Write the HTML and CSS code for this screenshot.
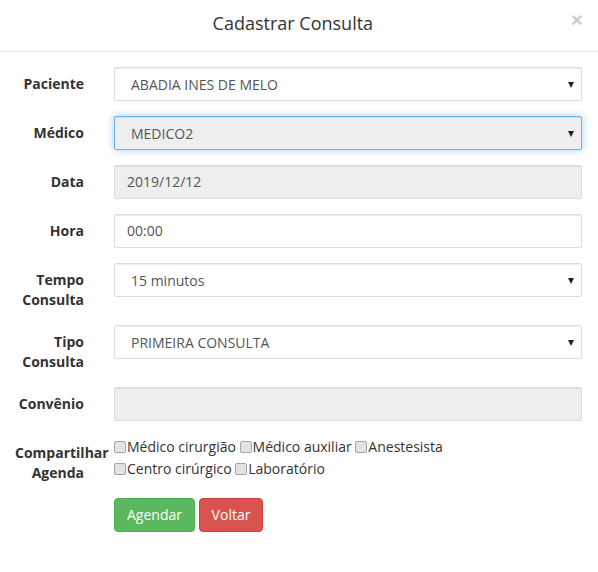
FILE: index.html
```html
<!DOCTYPE html>
<html lang="pt-BR">
<head>
<meta charset="utf-8">
<title>Cadastrar Consulta</title>
<link rel="stylesheet" href="styles.css">
</head>
<body>
<div class="modal">
  <div class="modal-header">
    <button class="close" type="button">&times;</button>
    <h4 class="modal-title">Cadastrar Consulta</h4>
  </div>
  <div class="modal-body">
    <form class="form">
      <div class="form-group">
        <label class="control-label">Paciente</label>
        <div class="control"><div class="select">ABADIA INES DE MELO</div></div>
      </div>
      <div class="form-group">
        <label class="control-label">Médico</label>
        <div class="control"><div class="select readonly focus">MEDICO2</div></div>
      </div>
      <div class="form-group">
        <label class="control-label">Data</label>
        <div class="control"><div class="input readonly">2019/12/12</div></div>
      </div>
      <div class="form-group">
        <label class="control-label">Hora</label>
        <div class="control"><div class="input">00:00</div></div>
      </div>
      <div class="form-group">
        <label class="control-label">Tempo Consulta</label>
        <div class="control"><div class="select">15 minutos</div></div>
      </div>
      <div class="form-group">
        <label class="control-label">Tipo Consulta</label>
        <div class="control"><div class="select">PRIMEIRA CONSULTA</div></div>
      </div>
      <div class="form-group">
        <label class="control-label">Convênio</label>
        <div class="control"><div class="input readonly"></div></div>
      </div>
      <div class="form-group">
        <label class="control-label">Compartilhar Agenda</label>
        <div class="control checks">
          <div class="check-line">
            <label class="check"><span class="box"></span>Médico cirurgião</label>
            <label class="check"><span class="box"></span>Médico auxiliar</label>
            <label class="check"><span class="box"></span>Anestesista</label>
          </div>
          <div class="check-line">
            <label class="check"><span class="box"></span>Centro cirúrgico</label>
            <label class="check"><span class="box"></span>Laboratório</label>
          </div>
        </div>
      </div>
      <div class="form-group">
        <div class="control offset">
          <button type="button" class="btn btn-success">Agendar</button>
          <button type="button" class="btn btn-danger">Voltar</button>
        </div>
      </div>
    </form>
  </div>
</div>
</body>
</html>
```

FILE: styles.css
```css
* { box-sizing: border-box; }
html, body {
  margin: 0;
  padding: 0;
  background: #fff;
}
body {
  font-family: "Open Sans", "Liberation Sans", sans-serif;
  font-size: 14px;
  line-height: 1.42857;
  color: #333;
}
.modal {
  width: 598px;
}
.modal-header {
  padding: 10px 15px 15px;
  border-bottom: 1px solid #e5e5e5;
  height: 52px;
}
.close {
  float: right;
  border: 0;
  background: transparent;
  padding: 0;
  margin-top: -1px;
  font-family: "Liberation Sans", Arial, sans-serif;
  font-size: 21px;
  font-weight: bold;
  line-height: 1;
  color: #000;
  opacity: 0.2;
  cursor: pointer;
}
.modal-title {
  margin: 0;
  text-align: center;
  font-size: 18px;
  font-weight: 400;
  line-height: 26px;
  color: #333;
}
.modal-body {
  padding: 15px 0;
}
.form-group {
  display: flex;
  margin-bottom: 15px;
}
.control-label {
  flex: 0 0 99px;
  width: 99px;
  padding: 7px 15px 0;
  text-align: right;
  font-weight: bold;
  white-space: normal;
}
.control {
  flex: 1;
  padding: 0 16px 0 15px;
  min-width: 0;
}
.offset {
  margin-left: 99px;
}
.input, .select {
  height: 34px;
  padding: 6px 12px;
  border: 1px solid #ddd;
  border-radius: 2px;
  background: #fff;
  color: #555;
  box-shadow: inset 0 1px 1px rgba(0,0,0,.075);
  line-height: 20px;
  font-size: 14px;
}
.select {
  position: relative;
  padding: 7px 12px 5px 16px;
}
.select::after {
  content: "";
  position: absolute;
  right: 7px;
  top: 14px;
  border-left: 3.5px solid transparent;
  border-right: 3.5px solid transparent;
  border-top: 6px solid #222;
}
.readonly {
  background: #eee;
}
.focus {
  border-color: #66afe9;
  box-shadow: inset 0 1px 1px rgba(0,0,0,.075), 0 0 8px rgba(102,175,233,.6);
}
.checks {
  font-size: 14px;
  line-height: 22px;
  color: #333;
}
.check {
  display: inline;
  font-weight: normal;
}
.box {
  display: inline-block;
  width: 12px;
  height: 12px;
  margin-right: 1px;
  border: 1px solid #a6a6a6;
  border-radius: 2px;
  background: #e3e3e3;
  vertical-align: -1px;
}
.btn {
  display: inline-block;
  height: 34px;
  padding: 6px 12px;
  font-family: inherit;
  font-size: 14px;
  line-height: 20px;
  border: 1px solid transparent;
  border-radius: 4px;
  color: #fff;
  cursor: pointer;
}
.btn-success {
  background: #5cb85c;
  border-color: #4cae4c;
}
.btn-danger {
  background: #d9534f;
  border-color: #d43f3a;
}
```
